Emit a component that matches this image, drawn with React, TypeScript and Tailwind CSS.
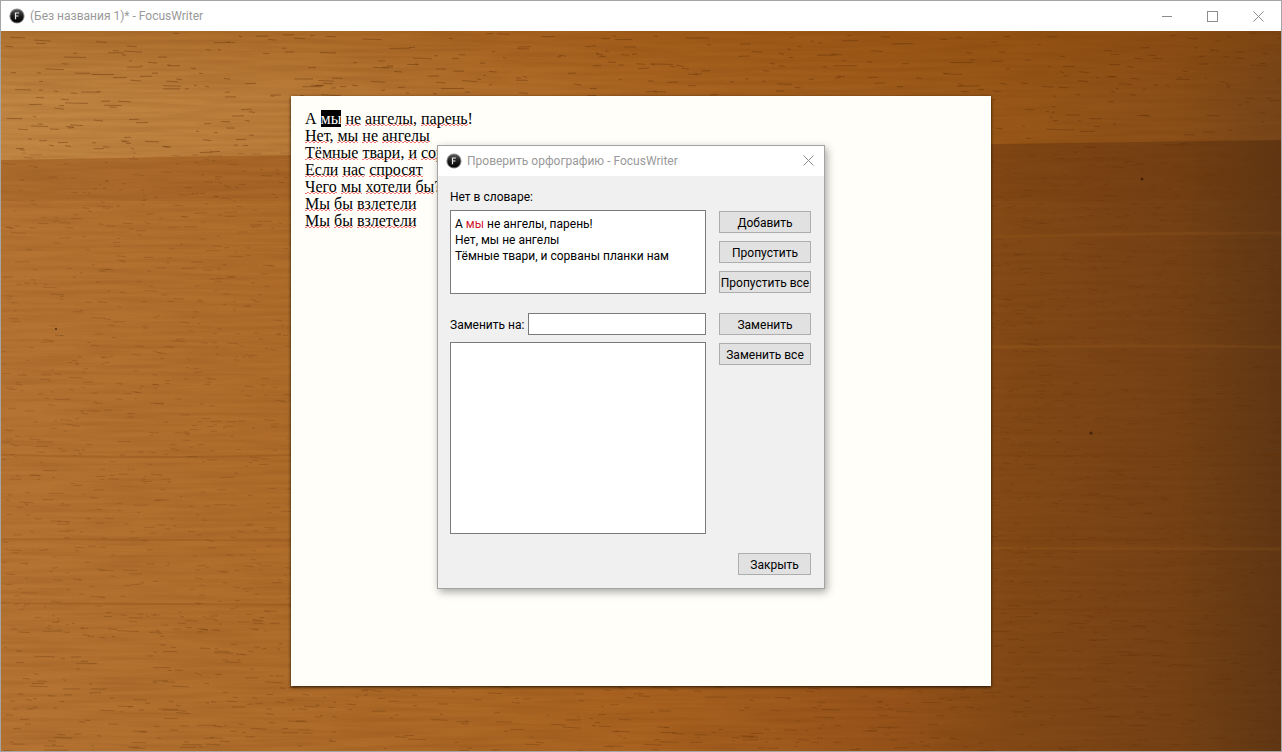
import { useId, useState } from 'react';
import type { ReactNode } from 'react';

const LINES = [
  'А мы не ангелы, парень!',
  'Нет, мы не ангелы',
  'Тёмные твари, и сорваны планки нам',
  'Если нас спросят',
  'Чего мы хотели бы?',
  'Мы бы взлетели',
  'Мы бы взлетели',
];

const WOOD_W = 1280;
const WOOD_H = 720;

// Small seeded generator, so that the grain is the same on every render
function makeRandom(seed: number) {
  let s = seed;
  return () => {
    s = (s * 1664525 + 1013904223) % 4294967296;
    return s / 4294967296;
  };
}

function grainPath(count: number, top: number, bottom: number, maxLen: number, seed: number) {
  const rnd = makeRandom(seed);
  let d = '';
  for (let i = 0; i < count; i++) {
    const x = Math.round(rnd() * WOOD_W);
    const y = (top + rnd() * (bottom - top)).toFixed(1);
    const len = Math.round(3 + rnd() * rnd() * maxLen);
    d += `M${x} ${y}l${len} ${(rnd() * 1.6 - 0.5).toFixed(1)}`;
  }
  return d;
}

const TOP_GRAIN = grainPath(480, 2, 124, 22, 7);
const MID_GRAIN = grainPath(3200, 122, 600, 14, 21);
const LOW_GRAIN = grainPath(760, 580, 720, 22, 42);

function Wood() {
  return (
    <svg
      className="absolute inset-0 size-full"
      viewBox={`0 0 ${WOOD_W} ${WOOD_H}`}
      preserveAspectRatio="none"
      aria-hidden="true"
    >
      <defs>
        <linearGradient id="wood-base" x1="0" x2="1" y1="0" y2="0">
          <stop offset="0" stopColor="#b57433" />
          <stop offset="0.22" stopColor="#af6d2b" />
          <stop offset="0.5" stopColor="#a96220" />
          <stop offset="0.7" stopColor="#96531a" />
          <stop offset="0.79" stopColor="#834916" />
          <stop offset="0.92" stopColor="#754115" />
          <stop offset="1" stopColor="#603714" />
        </linearGradient>
        <linearGradient id="wood-plank" x1="0" x2="1" y1="0" y2="0">
          <stop offset="0" stopColor="#c28744" />
          <stop offset="0.22" stopColor="#bb7d3a" />
          <stop offset="0.5" stopColor="#ac6623" />
          <stop offset="0.78" stopColor="#995818" />
          <stop offset="0.92" stopColor="#8b4f18" />
          <stop offset="1" stopColor="#764519" />
        </linearGradient>
        <linearGradient id="wood-top" x1="0" x2="0" y1="0" y2="1">
          <stop offset="0" stopColor="#8a4606" stopOpacity="0.3" />
          <stop offset="1" stopColor="#8a4606" stopOpacity="0" />
        </linearGradient>
        <filter id="wood-noise" x="0" y="0" width="1" height="1" colorInterpolationFilters="sRGB">
          <feTurbulence type="fractalNoise" baseFrequency="0.012 0.22" numOctaves="4" seed="5" />
          <feColorMatrix values="0 0 0 0 0.36  0 0 0 0 0.16  0 0 0 0 0  0.9 0 0 0 -0.3" />
        </filter>
      </defs>
      <rect width={WOOD_W} height={WOOD_H} fill="url(#wood-base)" />
      <path d="M0 0H1280V109L640 118L0 129Z" fill="url(#wood-plank)" />
      <rect width={WOOD_W} height="70" fill="url(#wood-top)" />
      <path d="M0 129L640 118L1280 109V170H0Z" fill="#6b3405" opacity="0.1" />
      <rect width={WOOD_W} height={WOOD_H} filter="url(#wood-noise)" opacity="0.28" />
      <g fill="none" stroke="#c98432" strokeWidth="3" opacity="0.1">
        <path d="M0 222Q160 218 290 222M990 206Q1140 202 1280 202" />
        <path d="M990 316Q1120 314 1280 316M0 520Q600 516 1280 518" />
      </g>
      <g fill="none" stroke="#6f3a08" strokeWidth="2" opacity="0.18">
        <path d="M0 424Q180 428 290 424M990 424Q1130 426 1280 424" />
        <path d="M0 508Q640 512 1280 508M0 572Q640 578 1280 580" />
      </g>
      <g fill="none" stroke="#5a2a04">
        <path d={TOP_GRAIN} opacity="0.38" />
        <path d={MID_GRAIN} opacity="0.2" />
        <path d={LOW_GRAIN} opacity="0.28" />
      </g>
      <g fill="#3a1a02" opacity="0.8">
        <circle cx="1141" cy="148" r="1.5" />
        <circle cx="1090" cy="402" r="1.5" />
        <circle cx="55" cy="298" r="1" />
      </g>
    </svg>
  );
}

function AppIcon() {
  const id = useId();
  return (
    <svg className="size-4 shrink-0" viewBox="0 0 16 16" aria-hidden="true">
      <defs>
        <linearGradient id={id} x1="0" x2="0" y1="0" y2="1">
          <stop offset="0" stopColor="#5a5a5a" />
          <stop offset="0.5" stopColor="#1c1c1c" />
          <stop offset="1" stopColor="#000" />
        </linearGradient>
      </defs>
      <circle cx="8" cy="8" r="7.6" fill="#8e8e8e" />
      <circle cx="8" cy="8" r="6.6" fill={`url(#${id})`} />
      <path d="M6.5 11.2V5H10M6.5 8H9.5" fill="none" stroke="#e8e8e8" strokeWidth="1.2" />
    </svg>
  );
}

function CloseIcon() {
  return (
    <svg className="size-[11px]" viewBox="0 0 11 11" fill="none" stroke="#8c8c8c" aria-hidden="true">
      <path d="M0.5 0.5L10.5 10.5M10.5 0.5L0.5 10.5" />
    </svg>
  );
}

const SQUIGGLE =
  'bg-[repeating-linear-gradient(90deg,#f07878_0_2px,transparent_2px_4px),repeating-linear-gradient(90deg,transparent_0_2px,#f07878_2px_4px)] bg-[length:100%_1px] bg-[position:0_calc(100%_-_1px),0_calc(100%_-_2px)] bg-no-repeat';

// Marks every word longer than the lone "А" as misspelled
function DocumentLine({ text, selected }: { text: string; selected?: string }) {
  const parts = text.split(/([А-Яа-яЁё]+)/);
  const hit = selected ? parts.indexOf(selected) : -1;
  return (
    <p>
      {parts.map((part, i) => {
        if (i % 2 === 0 || part === 'А') return part;
        return (
          <span key={i} className={i === hit ? 'bg-black text-white' : SQUIGGLE}>
            {part}
          </span>
        );
      })}
    </p>
  );
}

function DialogButton({ children, className = 'w-full' }: { children: ReactNode; className?: string }) {
  return (
    <button
      type="button"
      className={`h-[22px] border border-[#adadad] bg-[#e1e1e1] pt-px text-center whitespace-nowrap ${className}`}
    >
      {children}
    </button>
  );
}

function SpellDialog() {
  const [replacement, setReplacement] = useState('');
  return (
    <section
      role="dialog"
      aria-labelledby="spell-title"
      className="absolute top-[114px] left-[436px] w-[388px] border border-[#a3a3a3] bg-[#f0f0f0] shadow-[2px_3px_8px_rgba(0,0,0,0.35)]"
    >
      <header className="flex h-[30px] items-center bg-white pr-[10px] pl-2">
        <AppIcon />
        <h2 id="spell-title" className="ml-[5px] flex-1 text-[#999999]">
          Проверить орфографию - FocusWriter
        </h2>
        <button type="button" aria-label="Закрыть окно" className="pb-px">
          <CloseIcon />
        </button>
      </header>
      <div className="pt-[13px] pr-[13px] pb-[13px] pl-3">
        <div id="context-label">Нет в словаре:</div>
        <div className="mt-[5px] flex gap-[13px]">
          <div
            role="textbox"
            aria-readonly="true"
            aria-multiline="true"
            aria-labelledby="context-label"
            className="h-[84px] flex-1 border border-[#7a7a7a] bg-white px-1 py-[5px]"
          >
            <p>
              А <span className="text-[#d0182c]">мы</span> не ангелы, парень!
            </p>
            <p>{LINES[1]}</p>
            <p>{LINES[2]}</p>
          </div>
          <div className="flex w-[92px] flex-col gap-2 pt-px">
            <DialogButton>Добавить</DialogButton>
            <DialogButton>Пропустить</DialogButton>
            <DialogButton>Пропустить все</DialogButton>
          </div>
        </div>
        <div className="mt-[19px] flex gap-[13px]">
          <div className="flex-1">
            <div className="flex items-center gap-1">
              <label htmlFor="replacement" className="pt-px whitespace-nowrap">
                Заменить на:
              </label>
              <input
                id="replacement"
                value={replacement}
                onChange={(e) => setReplacement(e.target.value)}
                className="h-[22px] w-0 flex-1 border border-[#7a7a7a] bg-white px-1 outline-none"
              />
            </div>
            <ul
              aria-label="Варианты замены"
              className="mt-[7px] h-[192px] border border-[#7a7a7a] bg-white"
            />
          </div>
          <div className="flex w-[92px] flex-col gap-2">
            <DialogButton>Заменить</DialogButton>
            <DialogButton>Заменить все</DialogButton>
          </div>
        </div>
        <div className="mt-[19px] flex justify-end">
          <DialogButton className="w-[73px]">Закрыть</DialogButton>
        </div>
      </div>
    </section>
  );
}

export default function App() {
  return (
    <div className="flex min-h-screen flex-col border border-[#a5a5a5] font-['Roboto','Noto_Sans',sans-serif] text-[12px] leading-4 text-black">
      <header className="flex h-[30px] items-center bg-white pl-2">
        <AppIcon />
        <h1 className="ml-[5px] flex-1 text-[#999999]">(Без названия 1)* - FocusWriter</h1>
        <div className="flex h-full">
          <button type="button" aria-label="Свернуть" className="flex w-[46px] items-center justify-center">
            <span className="h-px w-[10px] bg-[#8c8c8c]" />
          </button>
          <button type="button" aria-label="Развернуть" className="flex w-[45px] items-center justify-center">
            <span className="size-[11px] border border-[#8c8c8c]" />
          </button>
          <button type="button" aria-label="Закрыть" className="flex w-[46px] items-center justify-center">
            <CloseIcon />
          </button>
        </div>
      </header>
      <main className="relative flex flex-1 justify-center overflow-hidden bg-[#a05c1c] py-[65px]">
        <Wood />
        <article
          lang="ru"
          className="relative w-[700px] bg-[#fffef8] p-[14px] font-['Liberation_Serif',serif] text-[16px] leading-[17px] shadow-[0_1px_3px_rgba(0,0,0,0.8)]"
        >
          {LINES.map((line, i) => (
            <DocumentLine key={i} text={line} selected={i === 0 ? 'мы' : undefined} />
          ))}
        </article>
        <SpellDialog />
      </main>
    </div>
  );
}
